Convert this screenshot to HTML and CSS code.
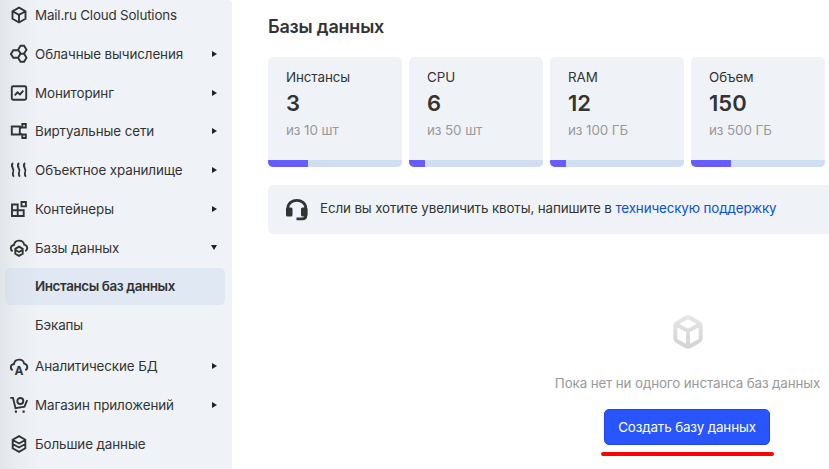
FILE: index.html
```html
<!DOCTYPE html>
<html lang="ru">
<head>
<meta charset="utf-8">
<title>Базы данных</title>
<link rel="stylesheet" href="styles.css">
</head>
<body>
<div class="app">
  <nav class="sidebar">
    <a class="item"><svg class="icon" viewBox="0 0 18 18"><path d="M9 1.700 15.500 5.200v7.600L9 16.500l-6.500-3.700V5.200zM3 5.500l6 3.400 6-3.400M9 8.900v7"/></svg><span class="label latin-label">Mail.ru Cloud Solutions</span></a>
    <a class="item"><svg class="icon" viewBox="0 0 18 18"><path d="M10.500.8h3.600l2.400 3.900-2.400 3.900h-3.600L8.100 4.700zM10.500 8.800h3.600l2.400 4-2.400 4h-3.600l-2.400-4zM8.500 5.200H3.300L.9 9l2.400 3.800h4.800M10.500 8.600l-2.200 3.800"/></svg><span class="label">Облачные вычисления</span><i class="arrow"></i></a>
    <a class="item"><svg class="icon" viewBox="0 0 18 18"><rect x="1.800" y="2.300" width="14.400" height="13.400" rx="1.500"/><path d="m4.700 11.400 2.800-3 2.500 2 3.300-3.800"/></svg><span class="label">Мониторинг</span><i class="arrow"></i></a>
    <a class="item"><svg class="icon" viewBox="0 0 18 18"><path d="M1.800 4.500h8v8h-8zM12.300 2h3.500v3.500h-3.500zM12.300 12.500h3.500V16h-3.500zM9.800 6.500l2.500-2M9.800 10.500l2.500 2.500"/></svg><span class="label">Виртуальные сети</span><i class="arrow"></i></a>
    <a class="item"><svg class="icon" viewBox="0 0 18 18"><path d="M3 2q-2 1.800-.4 4.700T2.900 12q-.4 2 .9 3.800M9 2q-2 1.800-.4 4.700T8.900 12q-.4 2 .9 3.800M15 2q-2 1.800-.4 4.700t.3 5.300q-.4 2 .9 3.800"/></svg><span class="label">Объектное хранилище</span><i class="arrow"></i></a>
    <a class="item"><svg class="icon" viewBox="0 0 18 18"><path d="M2 4.500h5.700v5.700H2zM2 10.200h5.700V16H2zM7.700 10.200h6V16h-6zM11.500 2h4.400v4.400h-4.400z"/></svg><span class="label">Контейнеры</span><i class="arrow"></i></a>
    <a class="item"><svg class="icon" viewBox="0 0 18 18"><path d="M2.700 12.300C-.3 10.500.5 6.500 4 6c.8-5.600 9-5.800 10.200-.4 3.600.6 4 5 1.100 6.700M9 7.700l3.700 2.100v5L9 16.900l-3.700-2.100v-5zM5.500 11 9 13l3.500-2"/></svg><span class="label">Базы данных</span><i class="arrow arrow-open"></i></a>
    <a class="item sub active">Инстансы баз данных</a>
    <a class="item sub last">Бэкапы</a>
    <a class="item"><svg class="icon" viewBox="0 0 18 18"><path d="M2.700 13.300C-.3 11.500.5 7.500 4 7c.8-5.600 9-5.800 10.200-.4 3.600.6 4 5 1.100 6.700"/><text class="icon-letter" x="9" y="17.500" text-anchor="middle">A</text></svg><span class="label">Аналитические БД</span><i class="arrow"></i></a>
    <a class="item"><svg class="icon" viewBox="0 0 18 18"><path d="M.3 1.900h2.700l2.500 10.300 9-1.500 2.700-6.500"/><circle cx="10.300" cy="5" r="3"/><path class="solid" d="M4.800 14.600h2.200v2.200H4.800zM12.500 14.600h2.200v2.200h-2.200z"/></svg><span class="label">Магазин приложений</span><i class="arrow"></i></a>
    <a class="item"><svg class="icon" viewBox="0 0 18 18"><path d="M9 1.200 15.300 4.700v8.600L9 16.800l-6.300-3.500V4.700zM2.700 5 9 8.500 15.300 5M2.700 9 9 12.500 15.300 9"/></svg><span class="label">Большие данные</span></a>
  </nav>
  <main class="content">
    <h1>Базы данных</h1>
    <div class="cards">
      <section class="card"><div class="name">Инстансы</div><div class="value">3</div><div class="limit">из 10 шт</div><div class="bar"><div class="fill" style="width:40px"></div></div></section>
      <section class="card"><div class="name latin">CPU</div><div class="value">6</div><div class="limit">из 50 шт</div><div class="bar"><div class="fill" style="width:16px"></div></div></section>
      <section class="card"><div class="name latin">RAM</div><div class="value">12</div><div class="limit">из 100 ГБ</div><div class="bar"><div class="fill" style="width:16px"></div></div></section>
      <section class="card"><div class="name">Объем</div><div class="value">150</div><div class="limit">из 500 ГБ</div><div class="bar"><div class="fill" style="width:40px"></div></div></section>
    </div>
    <div class="notice">
      <svg class="headset" viewBox="0 0 22 22"><path d="M1.800 10V9.500C1.800-1.400 19.800-1.400 19.800 9.500v7q0 3.300-3.300 3.300h-6"/><rect x="0" y="8.500" width="6.500" height="9" rx="1.500"/><rect x="15" y="8.500" width="6.500" height="9" rx="1.500"/></svg>
      <span class="notice-text">Если вы хотите увеличить квоты, напишите в <a>техническую поддержку</a></span>
    </div>
    <div class="empty">
      <svg class="cube" viewBox="0 0 30 34"><defs><linearGradient id="g" gradientUnits="userSpaceOnUse" x1="0" y1="0" x2="0" y2="34"><stop offset="0" stop-color="#e6e6e6"/><stop offset="1" stop-color="#d2d2d2"/></linearGradient></defs><path d="M13.500 2.600q1.500-.9 3 0l9.500 5.300q1.700 1 1.700 2.800v12.600q0 1.800-1.700 2.800l-9.500 5.300q-1.500.9-3 0L4 26.100q-1.700-1-1.700-2.800V10.700q0-1.800 1.700-2.800zM3.500 9.500 15 16l11.500-6.500M15 16v15"/></svg>
      <p class="empty-text">Пока нет ни одного инстанса баз данных</p>
      <button class="create">Создать базу данных</button>
      <div class="underline"></div>
    </div>
  </main>
</div>
</body>
</html>
```
FILE: styles.css
```css
* { box-sizing: border-box; }
body { margin: 0; width: 829px; height: 469px; overflow: hidden; background: #fff; color: #333; font: 13.4px/20px Inter, "Liberation Sans", sans-serif; letter-spacing: -.1px; }
.app { display: flex; height: 469px; overflow: hidden; }
.sidebar { flex: 0 0 232px; height: 469px; overflow: hidden; background: linear-gradient(90deg, rgba(0,0,0,.06), rgba(0,0,0,.025) 16px, transparent 40px), #eff3f8; border-radius: 0 4px 0 0; display: flex; flex-direction: column; }
.item { flex: none; display: flex; align-items: center; height: 38.8px; padding: 0 14px 0 10px; white-space: nowrap; }
.item:first-child { margin-top: -4.350px; }
.icon { width: 18px; height: 18px; margin-right: 7px; fill: none; stroke: #333; stroke-width: 1.9; overflow: visible; }
.icon .solid { fill: #333; stroke: none; }
.icon-letter { font: 700 12px Inter, sans-serif; letter-spacing: 0; fill: #333; stroke: none; }
.label { flex: 1; }
.latin-label { letter-spacing: -.18px; }
.arrow { border-left: 5px solid #222; border-top: 3px solid transparent; border-bottom: 3px solid transparent; margin-right: 1px; }
.arrow-open { border-top: 5px solid #222; border-bottom: 0; border-left: 3px solid transparent; border-right: 3px solid transparent; }
.sub { padding-left: 35px; }
.active { height: 37px; margin: .6px 7px 0 5px; padding-left: 30px; background: rgba(200,214,235,.4); border-radius: 5px; font-weight: 600; letter-spacing: -.38px; }
.last { height: 41.800px; padding-bottom: 1px; }
.content { flex: 1; min-width: 0; padding: 14px 0 0 36px; }
h1 { margin: 0; font-size: 18px; line-height: 26px; font-weight: 600; letter-spacing: -.2px; }
.cards { display: flex; gap: 7px; margin-top: 17px; }
.card { flex: 0 0 134px; height: 110px; padding-top: 10px; border-radius: 5px; overflow: hidden; background: #eff3f8; display: flex; flex-direction: column; }
.name, .value, .limit { padding-left: 18px; }
.latin { letter-spacing: 0; }
.value { font-size: 22px; line-height: 32px; font-weight: 600; letter-spacing: 0; }
.limit { margin-top: 1px; color: #999; letter-spacing: -.08px; }
.bar { margin-top: auto; height: 7px; background: #d0ddf3; }
.fill { height: 7px; background: #665cff; }
.notice { height: 49px; margin-top: 18px; padding-left: 18px; display: flex; align-items: center; background: #eff3f8; border-radius: 5px 0 0 5px; white-space: nowrap; }
.notice-text { padding-bottom: 3px; letter-spacing: -.13px; }
.headset { width: 22px; height: 22px; margin-right: 12px; fill: #333; overflow: visible; }
.headset path { fill: none; stroke: #333; stroke-width: 2.8; }
.notice a { color: #0c4fd8; }
.empty { width: 265px; margin: 81px 0 0 287px; display: flex; flex-direction: column; align-items: center; }
.cube { width: 30px; height: 34px; fill: none; stroke: url(#g); stroke-width: 4; }
.empty-text { margin: 24px 0 16px; color: #999; letter-spacing: -.14px; white-space: nowrap; }
.create { width: 166px; height: 36px; margin-right: 1px; padding: 0; border: 1px solid #2046e8; border-radius: 5px; background: #2955ff; color: #fff; font: inherit; letter-spacing: -.13px; white-space: nowrap; }
.underline { width: 173px; height: 4px; margin-top: 7px; border-radius: 2px; background: #f00; }
```
